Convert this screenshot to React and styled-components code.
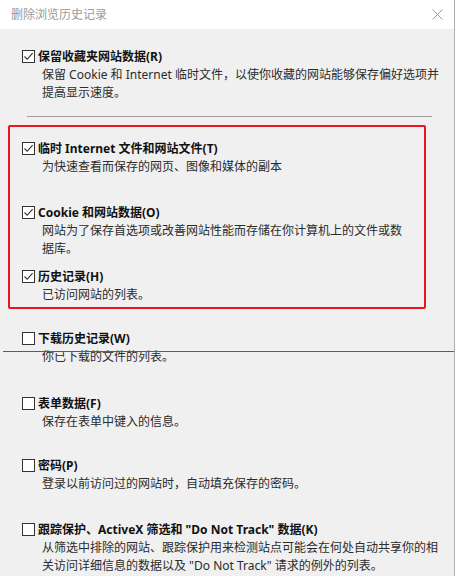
import React from 'react';
import styled, { createGlobalStyle } from 'styled-components';

const GlobalStyle = createGlobalStyle`
  html, body {
    margin: 0;
    padding: 0;
    background: #f0f0f0;
  }
  body {
    font-family: "Noto Sans", "Noto Sans CJK SC", sans-serif;
    -webkit-font-smoothing: antialiased;
  }
`;

const Dialog = styled.div`
  position: relative;
  width: 454px;
  height: 576px;
  overflow: hidden;
  background: #f0f0f0;
  border-right: 1px solid #adadad;
`;

const TitleBar = styled.div`
  height: 29px;
  background: #fff;
  display: flex;
  align-items: center;
  justify-content: space-between;
  padding: 0 11px 0 11px;
  box-sizing: border-box;
`;

const Title = styled.span`
  font-size: 12px;
  color: #9a9a9a;
  line-height: 1;
`;

const CloseButton = styled.button`
  border: none;
  background: none;
  padding: 0;
  width: 12px;
  height: 12px;
  display: flex;
  align-items: center;
  justify-content: center;
`;

const Body = styled.div`
  padding-top: 21px;
`;

const Option = styled.div`
  height: ${(p) => p.$h}px;
  padding-left: ${(p) => (p.$inset ? 12 : 22)}px;
  margin-top: ${(p) => p.$mt || 0}px;
`;

const LabelRow = styled.label`
  display: flex;
  align-items: center;
  gap: 3px;
  height: 13px;
`;

const Box = styled.span`
  width: 13px;
  height: 13px;
  box-sizing: border-box;
  border: 1px solid #333;
  background: #fff;
  display: flex;
  align-items: center;
  justify-content: center;
  flex-shrink: 0;
`;

const LabelText = styled.span`
  font-size: 12px;
  font-weight: 700;
  color: #111;
  white-space: nowrap;
  line-height: 13px;
`;

const Desc = styled.div`
  margin-top: 3px;
  padding-left: 20px;
  font-size: 12px;
  line-height: 18px;
  color: #2b2b2b;
`;

const DescLine = styled.div`
  white-space: nowrap;
`;

const Separator = styled.div`
  height: 1px;
  background: #a0a0a0;
  margin: 0 22px 0 27px;
`;

const Highlight = styled.div`
  margin: 8px 0 0 8px;
  width: 418px;
  box-sizing: border-box;
  border: 2px solid #e8161c;
  border-radius: 2px;
  padding-top: 15px;
`;

const RedLine = styled.div`
  position: absolute;
  top: 351px;
  left: 3px;
  right: 0;
  height: 1px;
  background: #d42a2a;
`;

const Check = ({ checked }) => (
  <Box>
    {checked && (
      <svg width="11" height="11" viewBox="0 0 11 11">
        <path d="M1.5 5.5 L4.2 8.3 L9.6 2.2" fill="none" stroke="#2a2a2a" strokeWidth="1.1" />
      </svg>
    )}
  </Box>
);

const Item = ({ item, h, inset, mt }) => (
  <Option $h={h} $inset={inset} $mt={mt}>
    <LabelRow>
      <Check checked={item.checked} />
      <LabelText>{item.label}</LabelText>
    </LabelRow>
    <Desc>
      {item.lines.map((l) => (
        <DescLine key={l}>{l}</DescLine>
      ))}
    </Desc>
  </Option>
);

const favorites = {
  label: '保留收藏夹网站数据(R)',
  checked: true,
  lines: ['保留 Cookie 和 Internet 临时文件，以使你收藏的网站能够保存偏好选项并', '提高显示速度。'],
};

const highlighted = [
  {
    label: '临时 Internet 文件和网站文件(T)',
    checked: true,
    lines: ['为快速查看而保存的网页、图像和媒体的副本'],
    h: 64,
  },
  {
    label: 'Cookie 和网站数据(O)',
    checked: true,
    lines: ['网站为了保存首选项或改善网站性能而存储在你计算机上的文件或数', '据库。'],
    h: 64,
  },
  {
    label: '历史记录(H)',
    checked: true,
    lines: ['已访问网站的列表。'],
    h: 37,
  },
];

const rest = [
  { label: '下载历史记录(W)', lines: ['你已下载的文件的列表。'], h: 65, mt: 23 },
  { label: '表单数据(F)', lines: ['保存在表单中键入的信息。'], h: 62 },
  { label: '密码(P)', lines: ['登录以前访问过的网站时，自动填充保存的密码。'], h: 64 },
  {
    label: '跟踪保护、ActiveX 筛选和 "Do Not Track" 数据(K)',
    lines: [
      '从筛选中排除的网站、跟踪保护用来检测站点可能会在何处自动共享你的相',
      '关访问详细信息的数据以及 "Do Not Track" 请求的例外的列表。',
    ],
    h: 60,
  },
];

const App = () => {
  return (
    <>
      <GlobalStyle />
      <Dialog>
        <TitleBar>
          <Title>删除浏览历史记录</Title>
          <CloseButton aria-label="关闭">
            <svg width="11" height="11" viewBox="0 0 11 11">
              <path d="M0.5 0.5 L10.5 10.5 M10.5 0.5 L0.5 10.5" stroke="#9a9a9a" strokeWidth="1" />
            </svg>
          </CloseButton>
        </TitleBar>
        <Body>
          <Item item={favorites} h={66} />
          <Separator />
          <Highlight>
            {highlighted.map((it) => (
              <Item key={it.label} item={it} h={it.h} inset />
            ))}
          </Highlight>
          {rest.map((it) => (
            <Item key={it.label} item={it} h={it.h} mt={it.mt} />
          ))}
        </Body>
        <RedLine />
      </Dialog>
    </>
  );
};

export default App;
